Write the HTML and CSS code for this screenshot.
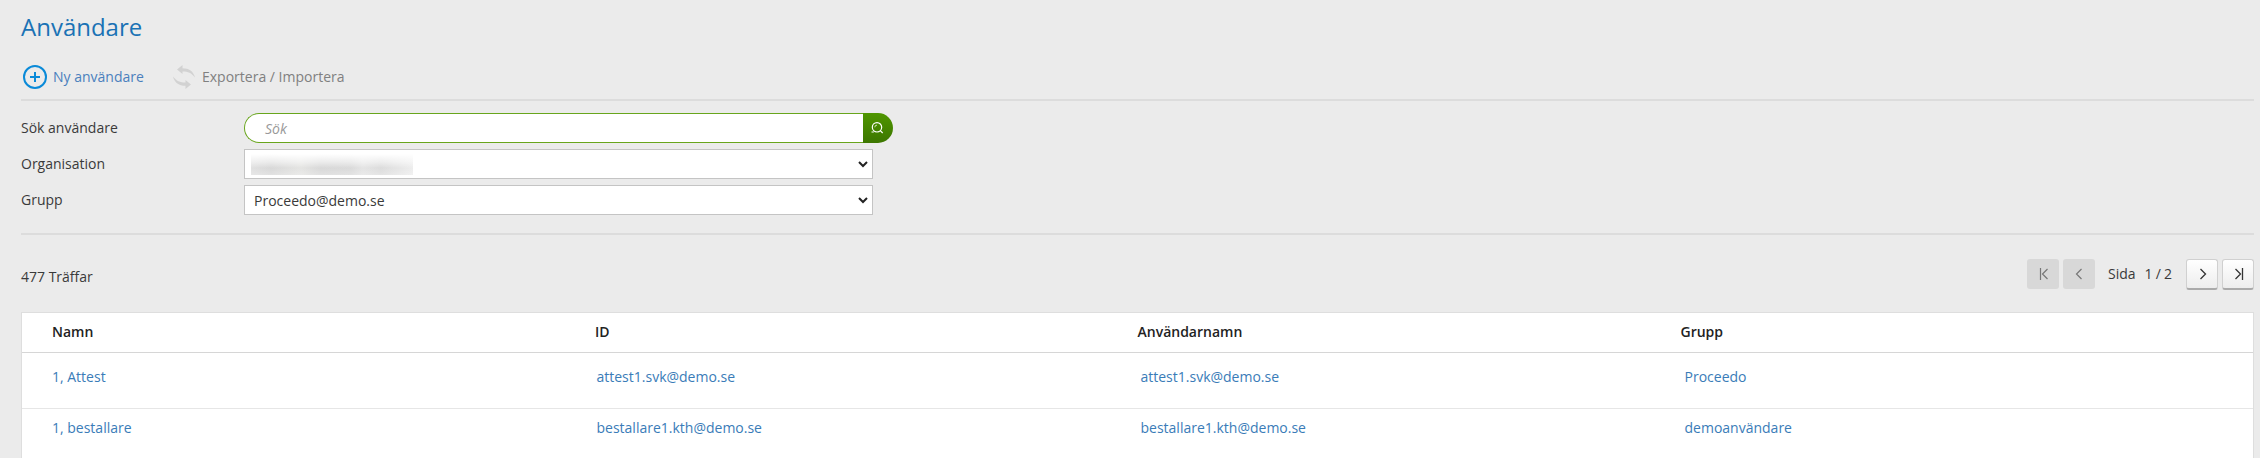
FILE: index.html
```html
<!DOCTYPE html>
<html lang="sv">
<head>
<meta charset="utf-8">
<title>Användare</title>
<link rel="stylesheet" href="styles.css">
</head>
<body>
<main class="page">
  <h1 class="title">Användare</h1>
  <nav class="toolbar">
    <a class="tool tool-new"><svg class="plus-icon" width="24" height="24" viewBox="0 0 24 24" fill="none" stroke="#0a8ad8" stroke-width="2"><circle cx="12" cy="12" r="11"/><path d="M12 7v10M7 12h10"/></svg>Ny användare</a>
    <a class="tool tool-export"><svg class="sync-icon" width="24" height="26" viewBox="0 0 24 26" fill="#d2d2d2"><path d="M5 5.500L10.500 1v3.200c6.500 0 11 3 12.500 9.300-3.500-4.500-7-6-12.500-6V10z"/><path d="M19 20.500L13.500 25v-3.200C7 21.800 2.500 18.800 1 12.500c3.500 4.500 7 6 12.500 6V16z"/></svg>Exportera / Importera</a>
  </nav>
  <form class="filters">
    <div class="field"><span class="label">Sök användare</span><div class="search"><span class="search-input">Sök</span><span class="search-button"><svg width="14" height="14" viewBox="0 0 14 14" fill="none" stroke="#fff" stroke-width="1.200"><circle cx="7" cy="6.300" r="4.700"/><path d="M10.300 9.600l2.400 2.400M1.500 11h2.300"/><path d="M4.800 6.300a2.200 2.200 0 0 1 2.200-2.200" stroke-width=".7"/></svg></span></div></div>
    <div class="field"><span class="label">Organisation</span><div class="select"><span class="masked"></span><svg class="caret" width="10" height="7" viewBox="0 0 10 7" fill="none" stroke="#222" stroke-width="2"><path d="M1 1l4 4 4-4"/></svg></div></div>
    <div class="field"><span class="label">Grupp</span><div class="select"><span class="value">Proceedo@demo.se</span><svg class="caret" width="10" height="7" viewBox="0 0 10 7" fill="none" stroke="#222" stroke-width="2"><path d="M1 1l4 4 4-4"/></svg></div></div>
  </form>
  <div class="results">
    <span class="hits">477 Träffar</span>
    <div class="pager">
      <span class="page-button disabled"><svg width="12" height="14" viewBox="0 0 12 14" fill="none" stroke="#777" stroke-width="1.200"><path d="M3.500 1v12M10.500 2l-5 5 5 5"/></svg></span>
      <span class="page-button disabled"><svg width="12" height="14" viewBox="0 0 12 14" fill="none" stroke="#777" stroke-width="1.200"><path d="M8.500 2l-5 5 5 5"/></svg></span>
      <span class="page-info"><span>Sida</span><span class="page-count">1 / 2</span></span>
      <span class="page-button"><svg width="12" height="14" viewBox="0 0 12 14" fill="none" stroke="#333" stroke-width="1.300"><path d="M4.500 2l5 5-5 5"/></svg></span>
      <span class="page-button"><svg width="12" height="14" viewBox="0 0 12 14" fill="none" stroke="#333" stroke-width="1.300"><path d="M3.500 2l5 5-5 5M10.500 1v12"/></svg></span>
    </div>
  </div>
  <section class="table">
    <div class="row head"><span>Namn</span><span>ID</span><span>Användarnamn</span><span>Grupp</span></div>
    <div class="row"><a>1, Attest</a><a>attest1.svk@demo.se</a><a>attest1.svk@demo.se</a><a>Proceedo</a></div>
    <div class="row last"><a>1, bestallare</a><a>bestallare1.kth@demo.se</a><a>bestallare1.kth@demo.se</a><a>demoanvändare</a></div>
  </section>
</main>
</body>
</html>
```
FILE: styles.css
```css
* { box-sizing: border-box; }
body {
  margin: 0;
  background: #ebebeb;
  color: #3a3a3a;
  font: 14px/20px "Open Sans", sans-serif;
  overflow: hidden;
}
.page { height: 458px; padding: 0 6px 0 21px; overflow: hidden; }
.title { margin: 0; padding-top: 11px; height: 61px; font-size: 24px; line-height: 32px; font-weight: 400; color: #1a72b5; }
.toolbar { display: flex; height: 40px; padding: 4px 0 0 2px; border-bottom: 2px solid #dcdcdc; }
.tool { display: flex; align-items: center; height: 24px; color: #808080; }
.tool-new { width: 149px; gap: 6px; color: #4a80bd; }
.tool-export { gap: 6px; }
.filters { display: flex; flex-direction: column; gap: 6px; height: 134px; padding-top: 12px; border-bottom: 2px solid #dcdcdc; }
.field { display: flex; align-items: center; height: 30px; }
.label { width: 223px; }
.search { display: flex; height: 30px; width: 649px; }
.search-input { flex: 1; padding: 5px 20px; background: #fff; border: 1px solid #68a51c; border-right: 0; border-radius: 15px 0 0 15px; color: #999; font-style: italic; line-height: 20px; }
.search-button { display: flex; align-items: center; justify-content: center; width: 30px; padding-right: 3px; border-radius: 0 15px 15px 0; background: linear-gradient(#4f9600, #3c7600); }
.select { display: flex; align-items: center; justify-content: space-between; width: 629px; height: 30px; padding: 2px 4px 0 6px; background: #fff; border: 1px solid #c4c4c4; }
.value { padding-left: 3px; }
.masked { width: 162px; height: 21px; margin-top: -2px; background: linear-gradient(#fff, rgba(255, 255, 255, .5) 8px, rgba(255, 255, 255, 0) 14px, rgba(255, 255, 255, .25)), linear-gradient(90deg, #e0e0e0, #d8d8d8 20px, #e4e4e2 50px, #d8d8d8 70px, #dadada 100px, #e4e4e4 112px, #dcdcdc 130px, #e4e4e4 145px, #ededed); }
.caret { margin-bottom: 2px; }
.results { display: flex; justify-content: space-between; height: 77px; padding-top: 24px; }
.hits { padding-top: 8px; }
.pager { display: flex; gap: 4px; }
.page-button { display: flex; align-items: center; justify-content: center; width: 32px; height: 31px; border: 1px solid #d0d0d0; border-bottom: 2px solid #aaa; border-radius: 3px; background: linear-gradient(#fff, #ededed); }
.disabled { height: 30px; border: 0; background: #d8d8d8; }
.page-info { display: flex; gap: 9px; width: 83px; padding: 5px 0 0 9px; }
.page-count { word-spacing: -.5px; }
.table { height: 160px; background: #fff; border: 1px solid #dedede; }
.row { display: grid; grid-template-columns: 544.500px 544px 544px 1fr; height: 51px; padding: 14px 0 0 30px; color: #3a7cb8; }
.head { grid-template-columns: 543px 542.500px 543px 1fr; height: 40px; padding-top: 9px; border-bottom: 1px solid #d6d6d6; font-weight: 600; color: #222; }
.head + .row { height: 56px; border-bottom: 1px solid #e6e6e6; }
.last { padding-top: 9px; }
```
